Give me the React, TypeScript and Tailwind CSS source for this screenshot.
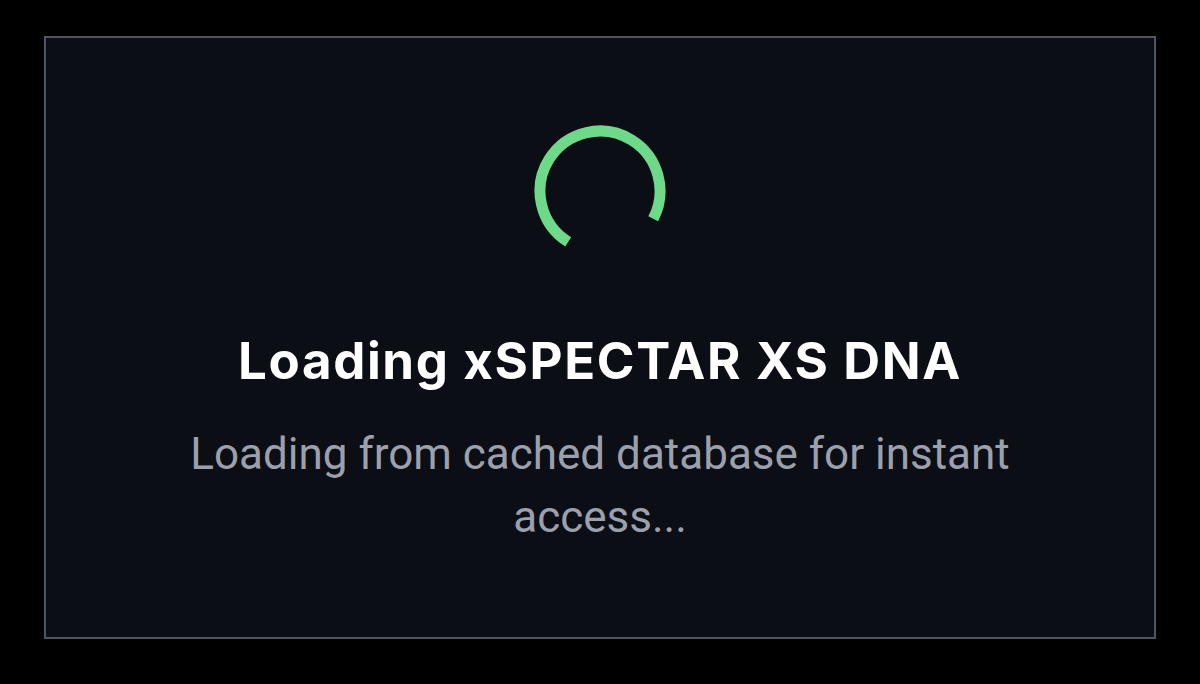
export default function App() {
  const r = 60;
  const circumference = 2 * Math.PI * r;
  const arc = (265 / 360) * circumference;

  return (
    <div className="flex h-[684px] w-[1200px] bg-black pl-[44px] pt-[36px]">
      <div className="flex h-[603px] w-[1112px] flex-col items-center border-2 border-[#4f5460] bg-[#0b0e15] pt-[87px]">
        <svg width="132" height="132" viewBox="0 0 132 132" className="shrink-0">
          <circle
            cx="66"
            cy="66"
            r={r}
            fill="none"
            stroke="#6fd98a"
            strokeWidth="11"
            strokeDasharray={`${arc} ${circumference}`}
            transform="rotate(122 66 66)"
          />
        </svg>
        <h1 className="mt-[74px] font-['Inter',sans-serif] text-[51px] leading-[60px] font-bold tracking-[0.032em] text-white">
          Loading xSPECTAR XS DNA
        </h1>
        <p className="mt-[32px] w-[900px] text-center font-['Roboto',sans-serif] text-[44px] leading-[63px] text-[#9ca0ac]">
          Loading from cached database for instant access...
        </p>
      </div>
    </div>
  );
}
